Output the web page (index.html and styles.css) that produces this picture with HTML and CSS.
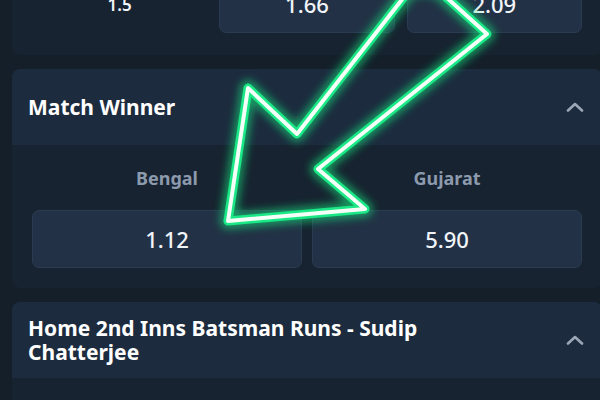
FILE: index.html
```html
<!DOCTYPE html>
<html lang="en">

<head>
    <meta charset="UTF-8">
    <meta name="viewport" content="width=device-width, initial-scale=1.0">
    <title>Markets</title>
    <link rel="stylesheet" href="styles.css">
</head>

<body>
    <main class="markets">
        <!-- previous market, scrolled mostly out of view -->
        <section class="market market-cut">
            <div class="market-body">
                <div class="line-row">
                    <span class="line-label">1.5</span>
                    <a href="javascript:;" class="odds">1.66</a>
                    <a href="javascript:;" class="odds">2.09</a>
                </div>
            </div>
        </section>

        <section class="market">
            <header class="market-head">
                <h2>Match Winner</h2>
                <svg class="chevron" width="18" height="10" viewBox="0 0 18 10">
                    <polyline points="2,8.5 9,2 16,8.5" />
                </svg>
            </header>
            <div class="market-body">
                <div class="team-row">
                    <div class="team">
                        <span class="team-name">Bengal</span>
                        <a href="javascript:;" class="odds">1.12</a>
                    </div>
                    <div class="team">
                        <span class="team-name">Gujarat</span>
                        <a href="javascript:;" class="odds">5.90</a>
                    </div>
                </div>
            </div>
        </section>

        <section class="market">
            <header class="market-head">
                <h2>Home 2nd Inns Batsman Runs - Sudip Chatterjee</h2>
                <svg class="chevron" width="18" height="10" viewBox="0 0 18 10">
                    <polyline points="2,8.5 9,2 16,8.5" />
                </svg>
            </header>
            <div class="market-body"></div>
        </section>
    </main>

    <!-- neon arrow annotation drawn over the page -->
    <svg class="pointer" width="600" height="400" viewBox="0 0 600 400">
        <defs>
            <filter id="glow" x="-20%" y="-20%" width="140%" height="140%">
                <feGaussianBlur stdDeviation="4" />
            </filter>
        </defs>
        <polygon class="pointer-glow" filter="url(#glow)"
            points="228,221 248,88 297,134 411,-12 436,-12 487,34 318,169 365,209" />
        <polygon class="pointer-edge"
            points="228,221 248,88 297,134 411,-12 436,-12 487,34 318,169 365,209" />
        <polygon class="pointer-core"
            points="228,221 248,88 297,134 411,-12 436,-12 487,34 318,169 365,209" />
    </svg>
</body>

</html>
```

FILE: styles.css
```css
* {
    padding: 0;
    margin: 0;
    box-sizing: border-box;
}

body {
    width: 600px;
    height: 400px;
    overflow: hidden;
    background: #141f2a;
    font-family: "Noto Sans", "Open Sans", sans-serif;
    color: #f1f4f8;
}

.markets {
    display: flex;
    flex-direction: column;
    gap: 14px;
    padding-left: 12px;
}

.market {
    width: 590px;
    border-radius: 8px;
    overflow: hidden;
    background: #172330;
}

.market-cut {
    margin-top: -25px;
    border-radius: 0 0 8px 8px;
}

.market-head {
    display: flex;
    align-items: center;
    justify-content: space-between;
    min-height: 76px;
    padding: 14px 22px 14px 16px;
    background: #1c2b3e;
}

.market-head h2 {
    font-size: 21px;
    line-height: 24px;
    font-weight: 700;
    color: #ffffff;
    max-width: 440px;
}

.chevron {
    flex: none;
    margin-right: -4px;
}

.chevron polyline {
    fill: none;
    stroke: #9aa6b5;
    stroke-width: 2.6;
    stroke-linecap: round;
    stroke-linejoin: round;
}

.market-body {
    padding: 22px 20px 20px;
}

.market-cut .market-body {
    padding: 0 20px 22px;
}

.line-row {
    display: grid;
    grid-template-columns: 1fr 1fr 1fr;
    gap: 12px;
    align-items: center;
}

.line-label {
    text-align: center;
    font-size: 17px;
    font-weight: 600;
    color: #f1f4f8;
}

.team-row {
    display: grid;
    grid-template-columns: 1fr 1fr;
    gap: 10px;
}

.team {
    display: flex;
    flex-direction: column;
    align-items: center;
    gap: 21px;
}

.team-name {
    font-size: 18px;
    line-height: 22px;
    font-weight: 700;
    color: #8c9aad;
}

.odds {
    display: flex;
    align-items: center;
    justify-content: center;
    width: 100%;
    height: 58px;
    border: 1px solid #2a3b52;
    border-radius: 7px;
    background: #223145;
    color: #f1f4f8;
    font-size: 22px;
    font-weight: 500;
    text-decoration: none;
}

.pointer {
    position: absolute;
    top: 0;
    left: 0;
    pointer-events: none;
}

.pointer polygon {
    fill: none;
    stroke-linejoin: round;
}

.pointer-glow {
    stroke: #12e07c;
    stroke-width: 16;
    opacity: 0.6;
}

.pointer-edge {
    stroke: #1ae886;
    stroke-width: 9;
}

.pointer-core {
    stroke: #f4fff8;
    stroke-width: 4;
}
```
